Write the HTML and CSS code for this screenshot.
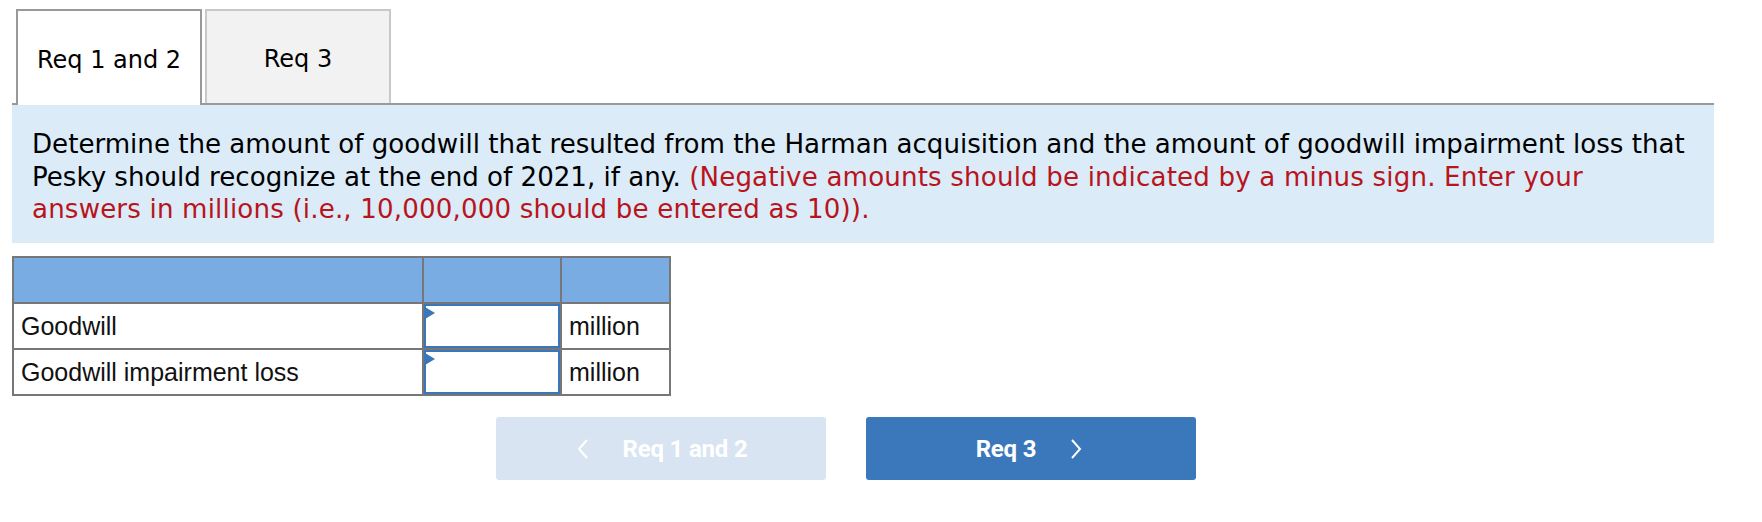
FILE: index.html
```html
<!DOCTYPE html>
<html lang="en">
<head>
<meta charset="utf-8">
<title>Req 1 and 2</title>
<link rel="stylesheet" href="styles.css">
</head>
<body>
<div class="page">
  <div class="tabs">
    <div class="tab tab-active">Req 1 and 2</div>
    <div class="tab tab-idle">Req 3</div>
  </div>
  <div class="panel">
    <p class="prompt">Determine the amount of goodwill that resulted from the Harman acquisition and the amount of goodwill impairment loss that Pesky should recognize at the end of 2021, if any. <span class="hint">(Negative amounts should be indicated by a minus sign. Enter your answers in millions (i.e., 10,000,000 should be entered as 10)).</span></p>
  </div>
  <div class="grid">
    <div class="cell head"></div>
    <div class="cell head"></div>
    <div class="cell head"></div>
    <div class="cell label">Goodwill</div>
    <div class="cell entry"><div class="input"><span class="flag"></span></div></div>
    <div class="cell unit">million</div>
    <div class="cell label">Goodwill impairment loss</div>
    <div class="cell entry"><div class="input"><span class="flag"></span></div></div>
    <div class="cell unit">million</div>
  </div>
  <div class="nav">
    <button class="btn btn-prev" type="button">
      <svg class="chev" width="12" height="20" viewBox="0 0 12 20"><path d="M10 1 L2 10 L10 19" fill="none" stroke="#fff" stroke-width="2"/></svg>
      <span>Req 1 and 2</span>
    </button>
    <button class="btn btn-next" type="button">
      <span>Req 3</span>
      <svg class="chev" width="12" height="20" viewBox="0 0 12 20"><path d="M2 1 L10 10 L2 19" fill="none" stroke="#fff" stroke-width="2"/></svg>
    </button>
  </div>
</div>
</body>
</html>
```
FILE: styles.css
```css
* { box-sizing: border-box; }
html, body { margin: 0; padding: 0; background: #fff; }
.page {
  padding-left: 12px;
  width: 1714px;
}
.tabs {
  display: flex;
  align-items: flex-end;
  padding-top: 9px;
  padding-left: 4px;
  border-bottom: 2px solid #999;
  height: 105px;
}
.tab {
  width: 186px;
  display: flex;
  align-items: center;
  justify-content: center;
  font-family: "DejaVu Sans", Verdana, sans-serif;
  font-size: 24px;
  color: #000;
  padding-top: 3px;
}
.tab-active {
  height: 96px;
  margin-bottom: -2px;
  background: #fff;
  border: 2px solid #999;
  border-bottom: none;
}
.tab-idle {
  height: 94px;
  margin-left: 3px;
  background: #f2f2f2;
  border: 2px solid #c8c8c8;
  border-bottom: none;
}
.panel {
  background: #dbebf8;
  height: 138px;
  padding: 23px 28px 0 20px;
}
.prompt {
  margin: 0;
  font-family: "DejaVu Sans", Verdana, sans-serif;
  font-size: 26.1px;
  line-height: 32.6px;
  color: #000;
}
.hint { color: #b8141c; letter-spacing: 0.17px; }
.grid {
  margin-top: 13px;
  display: grid;
  grid-template-columns: 410px 138px 109px;
  grid-auto-rows: 46px;
  width: max-content;
  border-top: 2px solid #777;
  border-left: 2px solid #777;
  font-family: "Liberation Sans", Arial, sans-serif;
  font-size: 25px;
  color: #111;
}
.cell {
  border-right: 2px solid #777;
  border-bottom: 2px solid #777;
  display: flex;
  align-items: center;
  padding-left: 7px;
}
.head { background: #79ace3; }
.entry { padding: 0; }
.input {
  position: relative;
  width: 136px;
  height: 44px;
  border: 2px solid #3a76ba;
  background: #fff;
}
.flag {
  position: absolute;
  left: -1px;
  top: 1px;
  width: 0;
  height: 0;
  border-left: 10px solid #3a76ba;
  border-top: 6px solid transparent;
  border-bottom: 6px solid transparent;
}
.nav {
  display: flex;
  gap: 40px;
  margin-top: 21px;
  padding-left: 484px;
}
.btn {
  width: 330px;
  height: 63px;
  border: none;
  border-radius: 3px;
  display: flex;
  align-items: center;
  justify-content: center;
  gap: 34px;
  font-family: Roboto, "Liberation Sans", sans-serif;
  font-weight: 700;
  font-size: 24px;
  letter-spacing: -0.2px;
  color: #fff;
  padding: 0;
}
.btn-prev { background: #d8e4f2; padding-left: 2px; }
.btn-next { background: #3b78bb; padding-right: 4px; }
.chev { display: block; }
```
